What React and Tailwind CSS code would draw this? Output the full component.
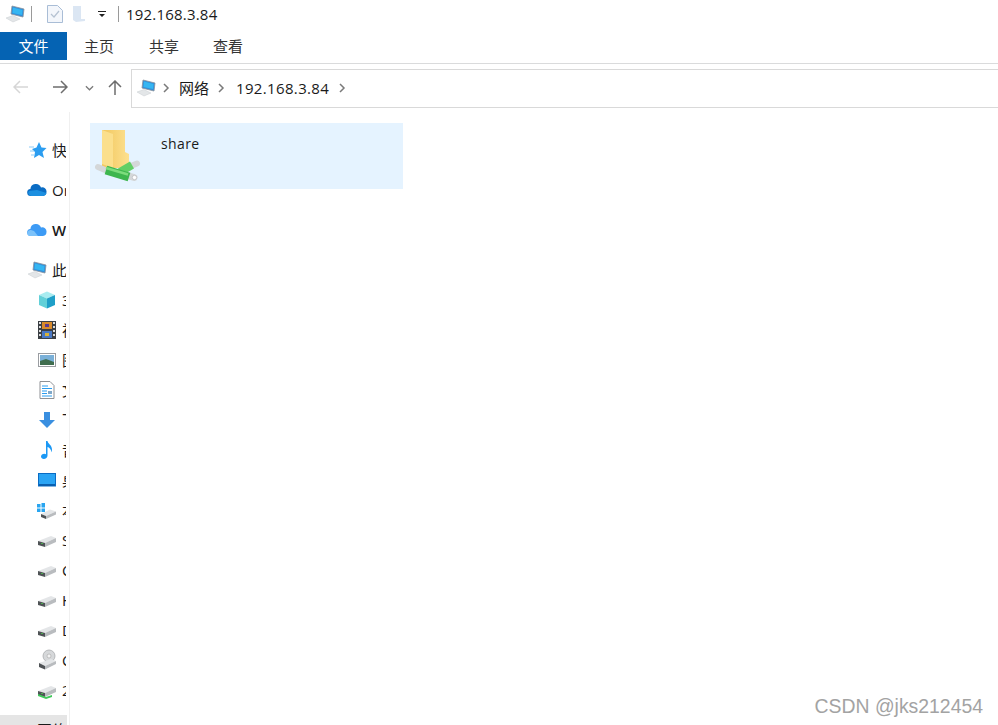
import React from 'react';

const FONT = "font-['Segoe_UI','Open_Sans','Noto_Sans_CJK_SC',sans-serif]";

const PcIcon = ({ className = 'w-[20px] h-[18px]' }) => (
  <svg viewBox="0 0 20 18" className={className}>
    <polygon points="7,1 19,4 18,12 6,9" fill="#2f8fdc" stroke="#8a9099" strokeWidth="0.8" />
    <polygon points="8,2.5 17.5,5 17,10 7.5,8" fill="#35b6f2" />
    <polygon points="1,13 8,10.5 15,14 8,17" fill="#e3e6e8" stroke="#c9ccd0" strokeWidth="0.5" />
  </svg>
);

const DriveIcon = ({ net }) => (
  <svg viewBox="0 0 20 18" className="w-[20px] h-[18px]">
    <polygon points="1,10 14,5 19,7 8,12" fill="#e4e6e8" />
    <polygon points="1,10 8,12 8,16 1,14" fill="#4f5356" />
    <polygon points="8,12 19,7 19,11 8,16" fill="#b9bcbf" />
    <rect x="4" y="12" width="2" height="1" fill="#4caf50" />
    {net && <polygon points="1,13 9,16 15,14 15,16 9,18 1,15" fill="#3fc85a" />}
  </svg>
);

const OptDriveIcon = () => (
  <svg viewBox="0 0 20 22" className="w-[20px] h-[22px]">
    <circle cx="12" cy="7" r="6" fill="#d6d8da" stroke="#a9acaf" strokeWidth="0.8" />
    <circle cx="12" cy="7" r="2" fill="#f3f3f3" stroke="#999" strokeWidth="0.5" />
    <polygon points="2,14 14,10 19,12 8,17" fill="#e4e6e8" />
    <polygon points="2,14 8,17 8,20.5 2,18" fill="#4f5356" />
    <polygon points="8,17 19,12 19,15 8,20.5" fill="#b9bcbf" />
  </svg>
);

const WinDriveIcon = () => (
  <svg viewBox="0 0 20 18" className="w-[20px] h-[18px]">
    <rect x="0" y="3" width="3.5" height="3.5" fill="#29a5f0" />
    <rect x="4.5" y="2" width="3.5" height="4.5" fill="#29a5f0" />
    <rect x="0" y="7.5" width="3.5" height="3.5" fill="#29a5f0" />
    <rect x="4.5" y="7.5" width="3.5" height="3.5" fill="#29a5f0" />
    <polygon points="4,13 13,8.5 19,10.5 9,15" fill="#e4e6e8" />
    <polygon points="4,13 9,15 9,18 4,16" fill="#4f5356" />
    <polygon points="9,15 19,10.5 19,13.5 9,18" fill="#b9bcbf" />
  </svg>
);

const StarIcon = () => (
  <svg viewBox="0 0 20 18" className="w-[20px] h-[18px]">
    <polygon points="12,1 14.5,6.5 19.5,7 15.5,11 17,17 12,14 7,17 8,11 5,8 9.500,6.500" fill="#2b9df0" />
    <path d="M2 6h5M3 10h4M4 14h3" stroke="#8ccbf7" strokeWidth="1" />
  </svg>
);

const OneDriveIcon = () => (
  <svg viewBox="0 0 20 14" className="w-[20px] h-[14px]">
    <path d="M4 13a3.5 3.5 0 0 1-.6-7A5.5 5.5 0 0 1 14 4.5a4.2 4.2 0 0 1 5.5 4.5A4 4 0 0 1 16 13z" fill="#0a6cc4" />
    <path d="M4 13a3 3 0 0 1-2-5l8-1 9.5 3a4 4 0 0 1-3.500 3z" fill="#1c8fe0" />
  </svg>
);

const BlueCloudIcon = () => (
  <svg viewBox="0 0 20 14" className="w-[20px] h-[14px]">
    <path d="M4 13a3.5 3.500 0 0 1-.6-7A5.500 5.500 0 0 1 14 4.500a4.200 4.200 0 0 1 5.500 4.500A4 4 0 0 1 16 13z" fill="#3d9bf5" />
    <path d="M3 13a3 3 0 0 1 1-6l3 1 4 5z" fill="#7cc2fa" />
  </svg>
);

const CubeIcon = () => (
  <svg viewBox="0 0 18 18" className="w-[18px] h-[18px]">
    <polygon points="9,0.500 17,4 9,7.500 1,4" fill="#a8ecf0" />
    <polygon points="1,4 9,7.500 9,17.500 1,14" fill="#62d0d8" />
    <polygon points="17,4 9,7.500 9,17.500 17,14" fill="#1f9fc8" />
  </svg>
);

const FilmIcon = () => (
  <svg viewBox="0 0 18 18" className="w-[18px] h-[18px]">
    <rect width="18" height="18" fill="#3b3f44" />
    <rect x="1" y="1" width="2" height="2" fill="#ddd" />
    <rect x="1" y="5" width="2" height="2" fill="#ddd" />
    <rect x="1" y="9" width="2" height="2" fill="#ddd" />
    <rect x="1" y="13" width="2" height="2" fill="#ddd" />
    <rect x="15" y="1" width="2" height="2" fill="#ddd" />
    <rect x="15" y="5" width="2" height="2" fill="#ddd" />
    <rect x="15" y="9" width="2" height="2" fill="#ddd" />
    <rect x="15" y="13" width="2" height="2" fill="#ddd" />
    <rect x="4" y="1" width="10" height="7" fill="#d98a2b" />
    <rect x="4" y="10" width="10" height="7" fill="#4a78c4" />
    <rect x="7" y="3" width="4" height="3" fill="#5b3a8e" />
    <rect x="7" y="12" width="4" height="3" fill="#d8b23a" />
  </svg>
);

const PictureIcon = () => (
  <svg viewBox="0 0 18 14" className="w-[18px] h-[14px]">
    <rect x="0.500" y="0.500" width="17" height="13" fill="#fff" stroke="#9a9da1" />
    <rect x="2" y="2" width="14" height="10" fill="#7ab0d8" />
    <polygon points="2,8 8,6 16,9 16,12 2,12" fill="#3f6d4e" />
  </svg>
);

const DocIcon = () => (
  <svg viewBox="0 0 16 18" className="w-[16px] h-[18px]">
    <path d="M1 .500h10l4 4v13H1z" fill="#fff" stroke="#8e9195" />
    <path d="M3 5h6M3 7.500h10M3 10h5M3 12.500h5M3 15h10" stroke="#2b9df0" />
    <rect x="9" y="10" width="4" height="3" fill="#7fa8c9" />
  </svg>
);

const DownIcon = () => (
  <svg viewBox="0 0 16 16" className="w-[16px] h-[16px]">
    <polygon points="5,0 11,0 11,8 16,8 8,16 0,8 5,8" fill="#3a8fe0" />
  </svg>
);

const MusicIcon = () => (
  <svg viewBox="0 0 12 18" className="w-[12px] h-[18px]">
    <path d="M5 0h1.500c.5 3 4.500 4 4.500 8.500 0 1-.3 2-.8 2.800.2-3-2-4.800-3.700-5.300V14.500c0 2-1.800 3.500-3.700 3.500C1.300 18 0 17 0 15.500S1.600 12.800 3.300 12.800c.7 0 1.300.2 1.700.4z" fill="#1b98f5" />
  </svg>
);

const DesktopIcon = () => (
  <svg viewBox="0 0 18 14" className="w-[18px] h-[14px]">
    <rect x="0.500" y="0.500" width="17" height="12.500" fill="#2aa4f4" stroke="#0a6cc4" />
    <rect x="1" y="11" width="16" height="2" fill="#0a5fae" />
  </svg>
);

const NetIcon = () => (
  <svg viewBox="0 0 18 18" className="w-[18px] h-[18px]">
    <circle cx="9" cy="9" r="7" fill="#5aa9e6" />
    <rect x="2" y="12" width="14" height="4" fill="#a9b0b6" />
  </svg>
);

// origin sits at (93,126) of the page
const BigShareFolder = () => (
  <svg viewBox="0 0 48 60" className="h-[60px] w-[48px]">
    <defs>
      <linearGradient id="folderBack" x1="0" x2="1" y1="0" y2="0">
        <stop offset="0" stopColor="#f1c75e" />
        <stop offset="1" stopColor="#fde08f" />
      </linearGradient>
    </defs>
    <polygon points="9,4 32,4 32,26 36,28 36,42 9,42" fill="url(#folderBack)" />
    <polygon points="9,4 20,8 20,42 9,38" fill="#fbdf8c" />
    <path d="M5 41l7 3" stroke="#d4d7d9" strokeWidth="6" strokeLinecap="round" />
    <path d="M38 40l6-2.500" stroke="#d4d7d9" strokeWidth="6" strokeLinecap="round" />
    <path d="M36 50l5 1.500" stroke="#d4d7d9" strokeWidth="7" strokeLinecap="round" />
    <circle cx="41.500" cy="51.500" r="2.200" fill="#fff" stroke="#aeb2b5" strokeWidth="0.600" />
    <path d="M27 46l12-7" stroke="#62cf66" strokeWidth="8" />
    <path d="M13 44l23 7" stroke="#3db64e" strokeWidth="9" />
    <path d="M13 42l22 6.500" stroke="#7cdc7c" strokeWidth="2.500" />
  </svg>
);

const Chevron = () => (
  <svg viewBox="0 0 8 10" className="h-[10px] w-[8px]">
    <path d="M2 1l4 4-4 4" fill="none" stroke="#7a7a7a" strokeWidth="1.500" />
  </svg>
);

const NavArrow = ({ dir = 'right', color }) => {
  const d = {
    left: 'M15 7H1M7 1L1 7l6 6',
    right: 'M1 7h14M9 1l6 6-6 6',
    up: 'M7 15V1M1 7l6-6 6 6',
  }[dir];
  return (
    <svg viewBox="0 0 16 16" className="h-[16px] w-[16px]">
      <path d={d} fill="none" stroke={color} strokeWidth="1.500" />
    </svg>
  );
};

const navItems = [
  { label: '快速访问', icon: <StarIcon />, mt: 'mt-[23px]' },
  { label: 'OneDrive', icon: <OneDriveIcon />, mt: 'mt-[10px]' },
  { label: 'WPS网盘', icon: <BlueCloudIcon />, mt: 'mt-[10px]', bold: true },
  { label: '此电脑', icon: <PcIcon />, mt: 'mt-[10px]' },
  { label: '3D 对象', icon: <CubeIcon />, sub: true },
  { label: '视频', icon: <FilmIcon />, sub: true },
  { label: '图片', icon: <PictureIcon />, sub: true },
  { label: '文档', icon: <DocIcon />, sub: true },
  { label: '下载', icon: <DownIcon />, sub: true },
  { label: '音乐', icon: <MusicIcon />, sub: true },
  { label: '桌面', icon: <DesktopIcon />, sub: true },
  { label: '本地磁盘', icon: <WinDriveIcon />, sub: true },
  { label: 'Soft', icon: <DriveIcon />, sub: true },
  { label: 'Code', icon: <DriveIcon />, sub: true },
  { label: 'Home', icon: <DriveIcon />, sub: true },
  { label: 'Data', icon: <DriveIcon />, sub: true },
  { label: 'CD 驱动器', icon: <OptDriveIcon />, sub: true },
  { label: '2 共享', icon: <DriveIcon net />, sub: true },
];

const NavRow = ({ item }) => (
  <div
    className={`flex h-[30px] items-center gap-[5px] overflow-hidden whitespace-nowrap ${
      item.sub ? 'pl-[37px]' : 'pl-[27px]'
    } ${item.mt || ''}`}
  >
    <span className="flex w-[20px] shrink-0 justify-center">{item.icon}</span>
    <span className={`text-[15px] text-[#1a1a1a] ${item.bold ? 'font-semibold' : ''}`}>{item.label}</span>
  </div>
);

const App = () => {
  return (
    <div className={`relative flex h-[725px] w-[998px] flex-col overflow-hidden bg-white ${FONT}`}>
      {/* title bar */}
      <div className="mb-[4px] flex h-[28px] shrink-0 items-center pl-[5px]">
        <PcIcon />
        <div className="ml-[6px] h-[16px] w-px bg-[#9a9a9a]" />
        <svg viewBox="0 0 16 18" className="ml-[15px] h-[18px] w-[16px]">
          <path d="M.5.5h10l5 5v12H.5z" fill="#f3f6fb" stroke="#a9bdd6" />
          <path d="M4 9l3 3 5-6" fill="none" stroke="#b5c2d2" strokeWidth="1.200" />
        </svg>
        <svg viewBox="0 0 12 18" className="ml-[10px] h-[18px] w-[12px]">
          <polygon points="0,1 8,1 8,14 12,14 12,16 3,17 0,15" fill="#dbe6f3" />
        </svg>
        <svg viewBox="0 0 8 8" className="ml-[13px] h-[8px] w-[8px]">
          <path d="M0 1h8v1H0zM1 4h6L4 7z" fill="#222" />
        </svg>
        <div className="ml-[12px] h-[16px] w-px bg-[#9a9a9a]" />
        <span className="ml-[7px] text-[15px] tracking-[0.2px] text-[#1a1a1a]">192.168.3.84</span>
      </div>

      {/* ribbon tabs */}
      <div className="flex h-[28px] shrink-0 items-stretch text-[15px] text-[#333]">
        <div className="flex w-[67px] items-center justify-center bg-[#0563b3] text-white">文件</div>
        <div className="ml-[17px] flex items-center">主页</div>
        <div className="ml-[35px] flex items-center">共享</div>
        <div className="ml-[34px] flex items-center">查看</div>
      </div>
      <div className="mt-[3px] h-px shrink-0 bg-[#dadbdc]" />

      {/* address row */}
      <div className="flex h-[48px] shrink-0 items-center">
        <div className="ml-[13px]"><NavArrow dir="left" color="#d6d6d6" /></div>
        <div className="ml-[23px]"><NavArrow dir="right" color="#6d6d6d" /></div>
        <svg viewBox="0 0 10 6" className="ml-[17px] h-[6px] w-[9px]">
          <path d="M1 1l4 4 4-4" fill="none" stroke="#7a7a7a" strokeWidth="1.400" />
        </svg>
        <div className="ml-[14px]"><NavArrow dir="up" color="#6d6d6d" /></div>
        <div className="ml-[7px] flex h-[39px] flex-1 items-center border border-r-0 border-[#d9d9d9] pl-[4px] text-[15px] text-[#1a1a1a]">
          <PcIcon />
          <span className="ml-[6px]"><Chevron /></span>
          <span className="ml-[9px]">网络</span>
          <span className="ml-[8px]"><Chevron /></span>
          <span className="ml-[11px] tracking-[0.35px]">192.168.3.84</span>
          <span className="ml-[9px]"><Chevron /></span>
        </div>
      </div>

      {/* body */}
      <div className="flex min-h-0 flex-1">
        <div className="flex w-[70px] shrink-0 border-r border-[#f0f0f0]">
          <div className="w-[67px] overflow-hidden">
            <div className="w-[66px]">
              {navItems.map((item) => (
                <NavRow key={item.label} item={item} />
              ))}
            </div>
            <div className="mt-[10px] flex h-[30px] items-center gap-[4px] overflow-hidden bg-[#e5e5e5] pl-[31px] text-[15px] whitespace-nowrap text-[#1a1a1a]">
              <NetIcon />
              <span>网络</span>
            </div>
          </div>
        </div>

        <div className="flex-1 pl-[20px] pt-[11px]">
          <div className="flex h-[66px] w-[313px] bg-[#e5f3ff] pl-[3px] pt-[3px]">
            <BigShareFolder />
            <span className="ml-[20px] mt-[8px] text-[14px] leading-[20px] tracking-[0.4px] text-[#1a1a1a]">share</span>
          </div>
        </div>
      </div>

      {/* watermark */}
      <div className="absolute bottom-[8px] right-[15px] font-['Liberation_Sans',sans-serif] text-[19.4px] leading-[22px] text-[#a3a3a3]">
        CSDN @jks212454
      </div>
    </div>
  );
};

export default App;
